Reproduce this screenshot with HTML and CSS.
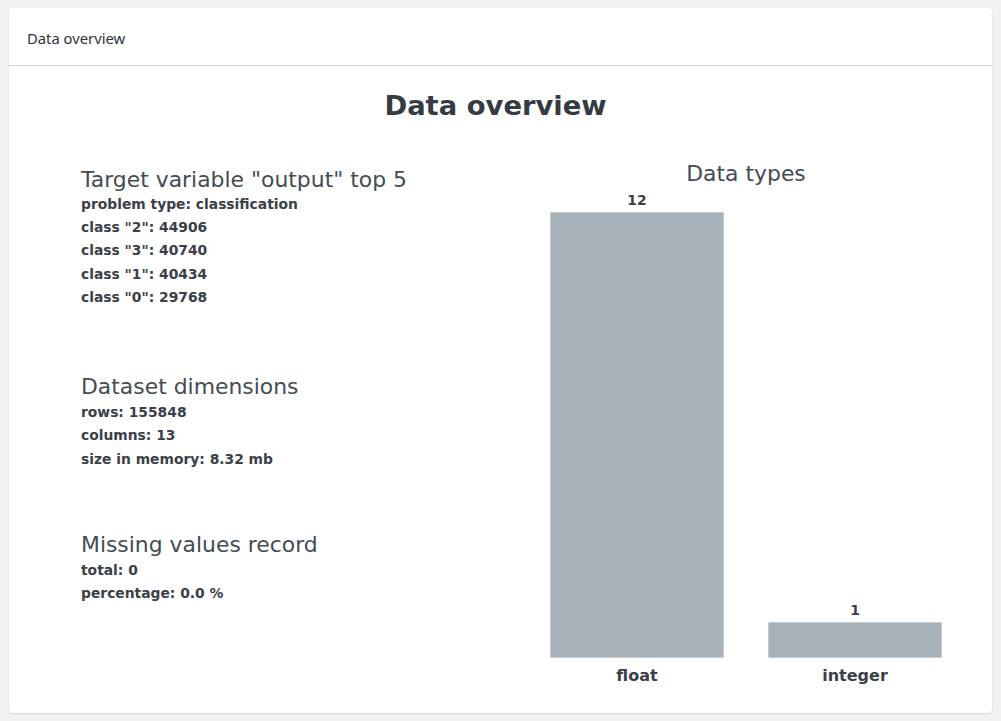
FILE: index.html
```html
<!DOCTYPE html>
<html>
<head>
<meta charset="utf-8">
<link rel="stylesheet" href="styles.css">
</head>
<body>
<div class="card">
  <div class="card-header">Data overview</div>
  <div class="card-body">
    <h1 class="title">Data overview</h1>
    <div class="row">
      <div class="info">
        <div class="block block-target">
          <h2 class="block-title">Target variable "output" top 5</h2>
          <div class="line">problem type: classification</div>
          <div class="line">class "2": 44906</div>
          <div class="line">class "3": 40740</div>
          <div class="line">class "1": 40434</div>
          <div class="line">class "0": 29768</div>
        </div>
        <div class="block block-dims">
          <h2 class="block-title">Dataset dimensions</h2>
          <div class="line">rows: 155848</div>
          <div class="line">columns: 13</div>
          <div class="line">size in memory: 8.32 mb</div>
        </div>
        <div class="block block-missing">
          <h2 class="block-title">Missing values record</h2>
          <div class="line">total: 0</div>
          <div class="line">percentage: 0.0 %</div>
        </div>
      </div>
      <div class="chart">
        <div class="chart-title">Data types</div>
        <div class="bars">
          <div class="bar-col">
            <div class="bar-value">12</div>
            <div class="bar" style="height:446px"></div>
          </div>
          <div class="bar-col">
            <div class="bar-value">1</div>
            <div class="bar" style="height:36px"></div>
          </div>
        </div>
        <div class="labels">
          <div class="label">float</div>
          <div class="label">integer</div>
        </div>
      </div>
    </div>
  </div>
</div>
</body>
</html>
```
FILE: styles.css
```css
html, body {
  margin: 0;
  padding: 0;
  background: #f2f2f2;
}
body {
  padding: 8px 9px;
  font-family: "DejaVu Sans", sans-serif;
}
.card {
  background: #fff;
  border-radius: 4px;
  height: 705px;
  box-shadow: 0 1px 2px rgba(0,0,0,0.12);
  box-sizing: border-box;
  overflow: hidden;
}
.card-header {
  height: 58px;
  box-sizing: border-box;
  border-bottom: 1px solid #d6d6d6;
  padding: 19px 18px 0;
  font-family: "Noto Sans", "Open Sans", sans-serif;
  font-size: 14.8px;
  line-height: 22px;
  color: #2f3338;
}
.card-body {
  padding-top: 24px;
}
.title {
  margin: 0;
  text-align: center;
  font-size: 27.4px;
  line-height: 32px;
  font-weight: bold;
  color: #353b42;
  padding-right: 10px;
}
.row {
  display: grid;
  grid-template-columns: 469px 392px;
  padding-left: 72px;
}
.info {
  display: flex;
  flex-direction: column;
}
.block-title {
  margin: 0;
  font-weight: normal;
  font-size: 21.9px;
  line-height: 26px;
  color: #454b53;
}
.line {
  font-size: 13.85px;
  font-weight: bold;
  line-height: 23.3px;
  color: #3b4048;
}
.block-target .line { line-height: 23.2px; }
.block-target { margin-top: 45px; }
.block-dims { margin-top: 65px; }
.block-dims .block-title, .block-missing .block-title { margin-bottom: 1px; }
.block-missing { margin-top: 61px; }
.chart {
  display: flex;
  flex-direction: column;
  align-items: stretch;
}
.chart-title {
  margin-top: 39px;
  text-align: center;
  font-size: 21.9px;
  line-height: 26px;
  color: #454b53;
}
.bars {
  height: 471px;
  display: flex;
  align-items: flex-end;
  gap: 44px;
}
.bar-col {
  width: 174px;
  display: flex;
  flex-direction: column;
}
.bar-value {
  text-align: center;
  font-size: 13.85px;
  font-weight: bold;
  line-height: 16px;
  margin-bottom: 4px;
  color: #3b4048;
}
.bar {
  background: #a7b2bb;
  border: 1px solid #c3cbd2;
  box-sizing: border-box;
}
.labels {
  display: flex;
  gap: 44px;
  margin-top: 8px;
}
.label {
  width: 174px;
  text-align: center;
  font-size: 16px;
  font-weight: bold;
  line-height: 20px;
  color: #3b4048;
}
```
